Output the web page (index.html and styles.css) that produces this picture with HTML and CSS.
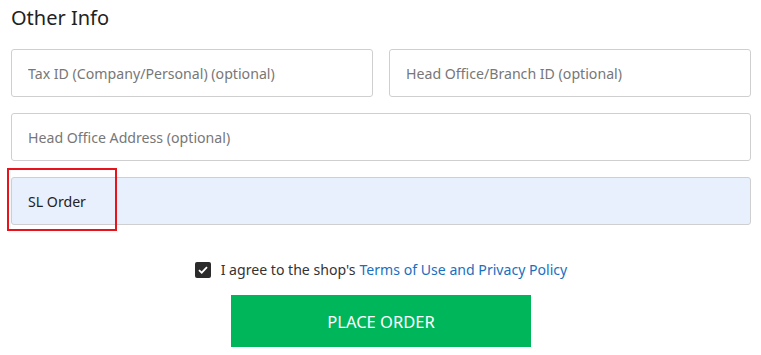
FILE: index.html
```html
<!DOCTYPE html>
<html lang="en">
<head>
    <meta charset="UTF-8">
    <meta name="viewport" content="width=device-width, initial-scale=1.0">
    <title>Other Info</title>
    <link rel="stylesheet" href="styles.css">
</head>
<body>
    <div class="page">
        <h2 class="title">Other Info</h2>
        <div class="row two">
            <input class="field" type="text" placeholder="Tax ID (Company/Personal) (optional)">
            <input class="field" type="text" placeholder="Head Office/Branch ID (optional)">
        </div>
        <div class="row">
            <input class="field" type="text" placeholder="Head Office Address (optional)">
        </div>
        <div class="row mark-wrap">
            <input class="field filled" type="text" value="SL Order">
            <span class="mark"></span>
        </div>
        <label class="agree">
            <span class="check">
                <svg width="10" height="8" viewBox="0 0 10 8"><path d="M1 4.2 L3.7 6.7 L9 1.2" fill="none" stroke="#fff" stroke-width="1.8"/></svg>
            </span>
            I agree to the shop's <a href="#">Terms of Use and Privacy Policy</a>
        </label>
        <div class="actions">
            <button class="order">PLACE ORDER</button>
        </div>
    </div>
</body>
</html>
```

FILE: styles.css
```css
body {
    margin: 0;
    background: #fff;
    font-family: "Noto Sans", "Open Sans", sans-serif;
    color: #222;
}
.page {
    width: 740px;
    margin-left: 11px;
    padding-top: 4px;
}
.title {
    margin: 0 0 18px;
    font-size: 20px;
    font-weight: 400;
    line-height: 27px;
    color: #222;
}
.row {
    display: flex;
    gap: 16px;
    margin-bottom: 16px;
}
.row.two .field {
    flex: 1;
}
.field {
    flex: 1;
    box-sizing: border-box;
    height: 48px;
    padding: 0 16px;
    border: 1px solid #cfcfcf;
    border-radius: 3px;
    font-family: inherit;
    font-size: 14.15px;
    color: #222;
    background: #fff;
    outline: none;
}
.field::placeholder {
    color: #777;
}
.field.filled {
    background: #e8f0fe;
}
.mark-wrap {
    position: relative;
}
.mark {
    position: absolute;
    left: -4px;
    top: -9px;
    width: 106px;
    height: 59px;
    border: 2px solid #e8141b;
}
.agree {
    display: flex;
    justify-content: center;
    align-items: center;
    gap: 10px;
    margin-top: 35px;
    font-size: 14.1px;
    color: #333;
}
.agree a {
    color: #1a6fbe;
    text-decoration: none;
    margin-left: -6px;
}
.check {
    display: inline-flex;
    align-items: center;
    justify-content: center;
    width: 16px;
    height: 16px;
    border-radius: 2px;
    background: #2b2b2b;
}
.actions {
    display: flex;
    justify-content: center;
    margin-top: 16px;
}
.order {
    width: 300px;
    height: 52px;
    border: none;
    background: #00b65a;
    color: #fff;
    font-family: inherit;
    font-size: 16.5px;
    cursor: pointer;
}
```
